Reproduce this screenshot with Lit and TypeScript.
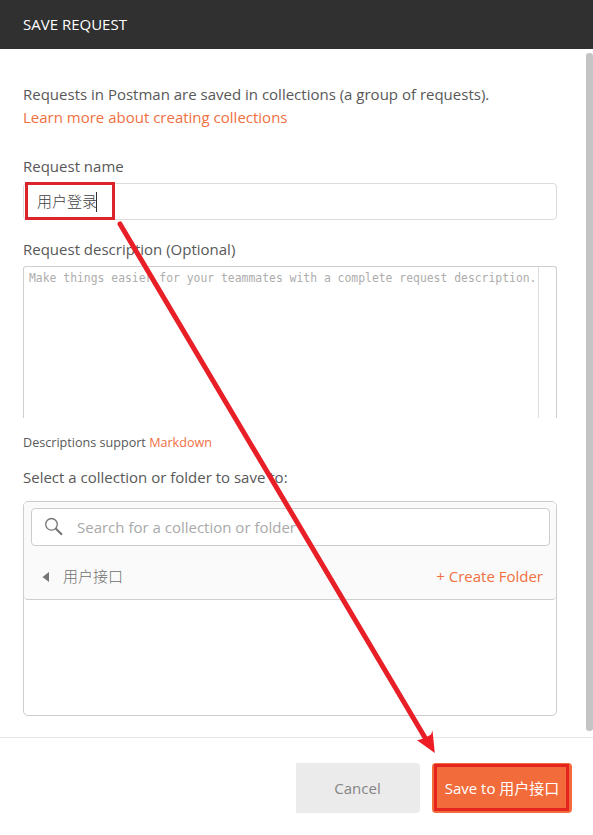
import { LitElement, html, css } from "lit";
import { customElement } from "lit/decorators.js";

@customElement("app-root")
export class AppRoot extends LitElement {
  static styles = css`
    :host {
      display: block;
      position: relative;
      width: 593px;
      height: 835px;
      overflow: hidden;
      background: #fff;
      color: #585858;
      font: 15px/23px "Open Sans", "Noto Sans CJK SC", sans-serif;
    }
    * { box-sizing: border-box; }
    .dialog { display: flex; flex-direction: column; height: 100%; }
    .header {
      height: 49px;
      padding-left: 23px;
      background: #303030;
      color: #fff;
      font-size: 15px;
      line-height: 49px;
    }
    .title { display: inline-block; white-space: nowrap; }
    .body { display: flex; height: 688px; }
    .form { flex: 1; padding: 34px 0 0 23px; }
    .form > * { width: 534px; }
    .track { width: 7px; padding-top: 4px; }
    .thumb { height: 678px; border-radius: 3px; background: #c4c4c4; }
    .line { white-space: nowrap; }
    .link { color: #f0703f; }
    .label { margin-top: 26px; }
    .input {
      display: flex;
      align-items: center;
      height: 37px;
      margin-top: 5px;
      padding-left: 13px;
      border: 1px solid #dbdbdb;
      border-radius: 4px;
      color: #404040;
      font-weight: 300;
    }
    .caret { width: 1px; height: 20px; margin-left: -1px; background: #303030; }
    .label.desc { margin-top: 18px; }
    .editor {
      display: flex;
      height: 152px;
      margin-top: 5px;
      border: 1px solid #cfcfcf;
      border-bottom: 0;
      border-radius: 3px 3px 0 0;
      color: #adadad;
      font: 11.4px/22px "DejaVu Sans Mono", monospace;
    }
    .editor-text { flex: 1; padding-left: 5px; white-space: nowrap; }
    .gutter { width: 18px; border-left: 1px solid #dedede; }
    .hint { margin-top: 13px; font-size: 12.6px; }
    .label.target { margin-top: 12px; }
    .picker {
      height: 215px;
      margin-top: 12px;
      border: 1px solid #cdcdcd;
      border-radius: 5px;
    }
    .picker-head {
      height: 98px;
      padding: 6px 6px 0 7px;
      border-bottom: 1px solid #cfcfcf;
      border-radius: 4px;
      background: #fafafa;
    }
    .search {
      display: flex;
      align-items: center;
      height: 38px;
      padding-left: 12px;
      gap: 13px;
      border: 1px solid #cdcdcd;
      border-radius: 4px;
      background: #fff;
      color: #a9a9a9;
    }
    .crumb {
      display: flex;
      align-items: center;
      height: 23px;
      margin-top: 19px;
      padding: 0 7px 0 11px;
      color: #707070;
    }
    .crumb-name { flex: 1; margin-left: 13px; font-weight: 300; }
    .footer {
      display: flex;
      justify-content: flex-end;
      gap: 12px;
      flex: 1;
      padding: 25px 21px 0 0;
      border-top: 1px solid #e6e6e6;
    }
    .btn {
      display: flex;
      align-items: center;
      justify-content: center;
      height: 50px;
      border-radius: 4px;
      white-space: nowrap;
    }
    .cancel { width: 124px; padding-right: 1px; border-radius: 0 4px 4px 0; background: #ebebeb; color: #858585; }
    .save { width: 140px; background: #f26b3a; color: #fff; }
    .overlay { position: absolute; inset: 0; }
  `;

  render() {
    return html`
      <div class="dialog">
        <div class="header"><span class="title">SAVE REQUEST</span></div>
        <div class="body">
          <div class="form">
            <div class="line">Requests in Postman are saved in collections (a group of requests).</div>
            <div class="line link">Learn more about creating collections</div>
            <div class="label">Request name</div>
            <div class="input"><span>用户登录</span><span class="caret"></span></div>
            <div class="label desc">Request description (Optional)</div>
            <div class="editor">
              <div class="editor-text">Make things easier for your teammates with a complete request description.</div>
              <div class="gutter"></div>
            </div>
            <div class="hint">Descriptions support <span class="link">Markdown</span></div>
            <div class="label target">Select a collection or folder to save to:</div>
            <div class="picker">
              <div class="picker-head">
                <div class="search">
                  <svg width="20" height="20" viewBox="0 0 20 20" fill="none" stroke="#757575">
                    <circle cx="7.5" cy="7.3" r="5.8" stroke-width="1.3" />
                    <path d="M11.7 11.5 18 17.8" stroke-width="2" />
                  </svg>
                  <span>Search for a collection or folder</span>
                </div>
                <div class="crumb">
                  <svg width="8" height="10" viewBox="0 0 8 10"><path d="M0.5 5 7 0V10Z" fill="#757575" /></svg>
                  <span class="crumb-name">用户接口</span>
                  <span class="link">+ Create Folder</span>
                </div>
              </div>
            </div>
          </div>
          <div class="track"><div class="thumb"></div></div>
        </div>
        <div class="footer">
          <div class="btn cancel">Cancel</div>
          <div class="btn save">Save to 用户接口</div>
        </div>
      </div>
      <svg class="overlay" width="593" height="835" viewBox="0 0 593 835" fill="none" stroke="#d9252b" stroke-width="3">
        <rect x="26.5" y="183.5" width="87" height="35" />
        <rect x="435.5" y="765.5" width="132" height="44" stroke="#e5231f" />
        <path d="M120 224 427 741" stroke="#e81f27" stroke-width="5" stroke-linecap="round" />
        <path d="M434.8 753 417 740.3 424 738.5 431 734.5 432.5 730.5Z" fill="#ee1c25" stroke="none" />
      </svg>
    `;
  }
}
